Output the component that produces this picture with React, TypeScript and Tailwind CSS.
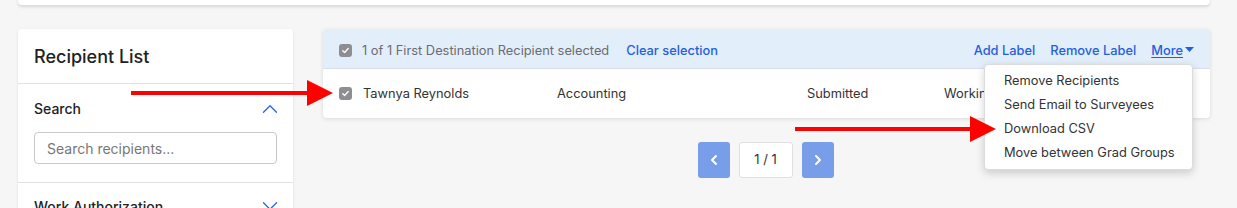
import { ChevronDown, ChevronLeft, ChevronRight, ChevronUp } from "lucide-react";

function Check() {
  return (
    <span className="flex h-[13px] w-[13px] items-center justify-center rounded-[3px] bg-[#8d8d92]">
      <svg width="9" height="9" viewBox="0 0 10 10" fill="none">
        <path d="M2 5.2l2 2L8 2.8" stroke="white" strokeWidth="1.5" strokeLinecap="round" strokeLinejoin="round" />
      </svg>
    </span>
  );
}

function Arrow({ width }: { width: number }) {
  return (
    <svg width={width} height="26" viewBox={`0 0 ${width} 26`}>
      <rect x="0" y="11" width={width - 24} height="4" fill="#ff0000" />
      <polygon points={`${width - 26},0 ${width},13 ${width - 26},26`} fill="#ff0000" />
    </svg>
  );
}

const menu = ["Remove Recipients", "Send Email to Surveyees", "Download CSV", "Move between Grad Groups"];

export default function App() {
  return (
    <div className="relative h-[208px] w-[1237px] overflow-hidden bg-[#f6f6f6] font-['Inter',sans-serif] text-[#222]">
      <div className="mx-[18px] -mt-[10px] h-[15px] w-[1192px] rounded-b-[4px] bg-white shadow-[0_2px_3px_rgba(0,0,0,0.12)]" />

      <div className="mt-[24px] flex gap-[30px] pl-[18px]">
        {/* left panel */}
        <div className="w-[275px] shrink-0 rounded-t-[4px] bg-white shadow-[0_1px_3px_rgba(0,0,0,0.1)]">
          <div className="flex h-[55px] items-center border-b border-[#e2e2e2] px-4 pt-[1px] text-[18px] font-medium">
            Recipient List
          </div>
          <div className="border-b border-[#e2e2e2] px-4 pb-[18px]">
            <div className="flex h-[48px] items-center justify-between pt-[1px]">
              <span className="text-[14px] font-medium">Search</span>
              <ChevronUp size={26} strokeWidth={1.2} className="-mr-[6px] text-[#2c63e0]" />
            </div>
            <div className="flex h-[32px] items-center rounded-[4px] border border-[#c9c9c9] px-3 text-[14px] text-[#777]">
              Search recipients...
            </div>
          </div>
          <div className="flex h-[46px] items-center justify-between px-4">
            <span className="text-[14px] font-medium">Work Authorization</span>
            <ChevronDown size={26} strokeWidth={1.2} className="-mr-[6px] text-[#2c63e0]" />
          </div>
        </div>

        {/* right column */}
        <div className="w-[887px]">
          <div className="rounded-[4px] bg-white shadow-[0_1px_4px_rgba(0,0,0,0.12)]">
            <div className="flex h-[40px] items-center rounded-t-[4px] border-b border-[#d6e0ea] bg-[#e3eefb] px-4 pt-[4px] text-[12.85px]">
              <Check />
              <span className="ml-[10px] text-[#6c6c70]">1 of 1 First Destination Recipient selected</span>
              <span className="ml-[17px] font-medium text-[#1f5fe0]">Clear selection</span>
              <div className="ml-auto flex items-center gap-[15px] font-medium text-[#1f5fe0]">
                <span>Add Label</span>
                <span>Remove Label</span>
                <span className="flex items-center">
                  <span className="underline underline-offset-2">More</span>
                  <svg width="9" height="6" viewBox="0 0 9 6" className="ml-[2px]">
                    <polygon points="0,0 9,0 4.5,5" fill="#1f5fe0" />
                  </svg>
                </span>
              </div>
            </div>
            <div className="flex h-[49px] items-center pl-4 text-[12.85px] text-[#333]">
              <Check />
              <span className="ml-[11px] w-[194px]">Tawnya Reynolds</span>
              <span className="w-[250px]">Accounting</span>
              <span className="w-[137px]">Submitted</span>
              <span>Working</span>
            </div>
          </div>

          <div className="mt-[24px] flex justify-center gap-[9px] pr-[2px]">
            <div className="flex h-[36px] w-[32px] items-center justify-center rounded-[3px] bg-[#789de9] text-white">
              <ChevronLeft size={16} strokeWidth={3} />
            </div>
            <div className="flex h-[36px] w-[54px] items-center justify-center rounded-[3px] border border-[#e0e0e0] bg-white text-[13px] text-[#333]">
              1 / 1
            </div>
            <div className="flex h-[36px] w-[32px] items-center justify-center rounded-[3px] bg-[#789de9] text-white">
              <ChevronRight size={16} strokeWidth={3} />
            </div>
          </div>
        </div>
      </div>

      {/* dropdown menu */}
      <div className="absolute left-[984px] top-[64px] w-[209px] rounded-[4px] border border-[#dcdcdc] bg-white py-[4px] shadow-[0_3px_8px_rgba(0,0,0,0.18)]">
        {menu.map((m) => (
          <div key={m} className="flex h-[24px] items-center pl-[19px] text-[12.85px] text-[#333]">
            {m}
          </div>
        ))}
      </div>

      {/* annotation arrows */}
      <div className="absolute left-[131px] top-[80px]">
        <Arrow width={202} />
      </div>
      <div className="absolute left-[795px] top-[116px]">
        <Arrow width={201} />
      </div>
    </div>
  );
}
